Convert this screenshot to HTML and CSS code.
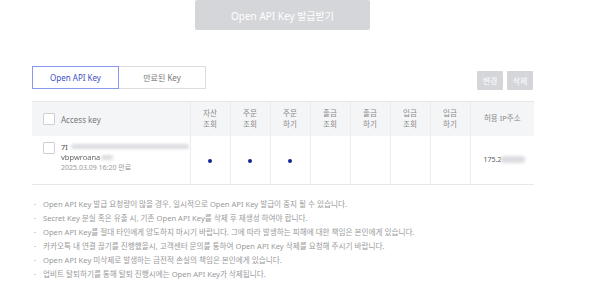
FILE: index.html
```html
<!DOCTYPE html>
<html lang="ko">
<head>
<meta charset="utf-8">
<link rel="stylesheet" href="styles.css">
</head>
<body>
<div class="wrap">
  <div class="issue-row"><button class="issue-btn">Open API Key 발급받기</button></div>
  <div class="toolbar">
    <div class="tabs">
      <div class="tab active">Open API Key</div>
      <div class="tab">만료된 Key</div>
    </div>
    <div class="actions">
      <button class="sm-btn">변경</button>
      <button class="sm-btn">삭제</button>
    </div>
  </div>
  <table class="keys">
    <thead>
      <tr>
        <th class="c-key"><span class="cb"></span><span>Access key</span></th>
        <th class="c-p">자산<br>조회</th>
        <th class="c-p">주문<br>조회</th>
        <th class="c-p">주문<br>하기</th>
        <th class="c-p">출금<br>조회</th>
        <th class="c-p">출금<br>하기</th>
        <th class="c-p">입금<br>조회</th>
        <th class="c-p">입금<br>하기</th>
        <th class="c-ip">허용 IP주소</th>
      </tr>
    </thead>
    <tbody>
      <tr>
        <td class="c-key">
          <div class="keycell">
            <span class="cb"></span>
            <div class="keytext">
              <div class="kline">7I<span class="blur b1"></span></div>
              <div class="kline dark"><span class="soft">vbpwroana</span><span class="blur b2"></span></div>
              <div class="kdate">2025.03.09 16:20 만료</div>
            </div>
          </div>
        </td>
        <td class="c-p"><span class="dot"></span></td>
        <td class="c-p"><span class="dot"></span></td>
        <td class="c-p"><span class="dot"></span></td>
        <td class="c-p"></td>
        <td class="c-p"></td>
        <td class="c-p"></td>
        <td class="c-p"></td>
        <td class="c-ip"><span class="ip">175.2<span class="blur b3"></span></span></td>
      </tr>
    </tbody>
  </table>
  <ul class="notes">
    <li>Open API Key 발급 요청량이 많을 경우, 일시적으로 Open API Key 발급이 중지 될 수 있습니다.</li>
    <li>Secret Key 분실 혹은 유출 시, 기존 Open API Key를 삭제 후 재생성 하여야 합니다.</li>
    <li>Open API Key를 절대 타인에게 양도하지 마시기 바랍니다. 그에 따라 발생하는 피해에 대한 책임은 본인에게 있습니다.</li>
    <li>카카오톡 내 연결 끊기를 진행했을시, 고객센터 문의를 통하여 Open API Key 삭제를 요청해 주시기 바랍니다.</li>
    <li>Open API Key 미삭제로 발생하는 금전적 손실의 책임은 본인에게 있습니다.</li>
    <li>업비트 탈퇴하기를 통해 탈퇴 진행시에는 Open API Key가 삭제됩니다.</li>
  </ul>
</div>
</body>
</html>
```

FILE: styles.css
```css
* { box-sizing: border-box; }
html, body { margin: 0; padding: 0; background: #fff; }
body {
  font-family: "Noto Sans", "Noto Sans CJK KR", sans-serif;
  color: #333;
  font-size: 8px;
}
.wrap {
  width: 502px;
  margin-left: 32px;
}
.issue-row {
  display: flex;
  justify-content: center;
}
.issue-btn {
  width: 175px;
  height: 30px;
  margin-left: -1px;
  border: 0;
  border-radius: 2px;
  background: #d5d6da;
  color: #fff;
  font-family: inherit;
  font-size: 10px;
  padding: 0;
}
.toolbar {
  display: flex;
  justify-content: space-between;
  align-items: flex-start;
  margin-top: 36px;
}
.tabs { display: flex; }
.tab {
  width: 87px;
  height: 23px;
  display: flex;
  align-items: center;
  justify-content: center;
  border: 1px solid #dcdde1;
  color: #777;
  font-size: 8px;
}
.tab + .tab { border-left: 0; }
.tab.active {
  border: 1px solid #8a97ef;
  color: #3d4fc8;
}
.actions {
  display: flex;
  gap: 4px;
  margin-top: 5px;
  margin-right: 1px;
}
.sm-btn {
  width: 26px;
  height: 19px;
  border: 0;
  border-radius: 1px;
  background: #d5d6da;
  color: #fff;
  font-family: inherit;
  font-size: 8px;
  padding: 0;
}
.keys {
  width: 100%;
  margin-top: 11px;
  border-collapse: collapse;
  table-layout: fixed;
}
.keys th {
  background: #f4f5f7;
  border-top: 1px solid #e6e7ea;
  height: 34px;
  font-weight: normal;
  color: #8a8a8a;
  font-size: 7.5px;
  line-height: 11px;
  padding: 0;
}
.keys td {
  height: 49px;
  border-bottom: 1px solid #e6e7ea;
  padding: 0;
  text-align: center;
}
.keys th + th, .keys td + td { border-left: 1px solid #ececef; }
.c-key { width: 158px; }
.c-p { width: 40px; }
.c-ip { width: 64px; }
th.c-key {
  text-align: left;
  padding-left: 11px;
}
th.c-key .cb { vertical-align: middle; margin-right: 6px; }
th.c-key span:last-child { vertical-align: middle; font-size: 8px; color: #777; }
.cb {
  display: inline-block;
  width: 12px;
  height: 12px;
  border: 1px solid #cfd0d4;
  border-radius: 1px;
  background: #fff;
}
.keycell {
  display: flex;
  align-items: flex-start;
  gap: 6px;
  text-align: left;
  padding-left: 11px;
  margin-top: -5px;
}
.keytext { line-height: 10.5px; color: #555; }
.kline { display: flex; align-items: center; font-size: 7.5px; color: #444; }
.kline.dark { color: #666; }
.soft { filter: blur(0.6px); }
.kdate { font-size: 7px; color: #999; }
.blur {
  display: inline-block;
  height: 5px;
  background: #dcdde0;
  filter: blur(1.5px);
  border-radius: 3px;
}
.b1 { width: 118px; margin-left: 3px; }
.b2 { width: 12px; margin-left: 1px; }
.b3 { width: 24px; height: 7px; margin-left: 0; }
.dot {
  display: inline-block;
  width: 4px;
  height: 4px;
  border-radius: 50%;
  background: #12278f;
}
.ip {
  display: flex;
  align-items: center;
  padding-left: 13px;
  font-size: 7px;
  color: #555;
}
.notes {
  list-style: none;
  margin: 12px 0 0;
  padding: 0;
  color: #9a9a9a;
  font-size: 7.6px;
  line-height: 14px;
}
.notes li {
  position: relative;
  padding-left: 11px;
  white-space: nowrap;
}
.notes li::before {
  content: "·";
  position: absolute;
  left: 2px;
}
```
